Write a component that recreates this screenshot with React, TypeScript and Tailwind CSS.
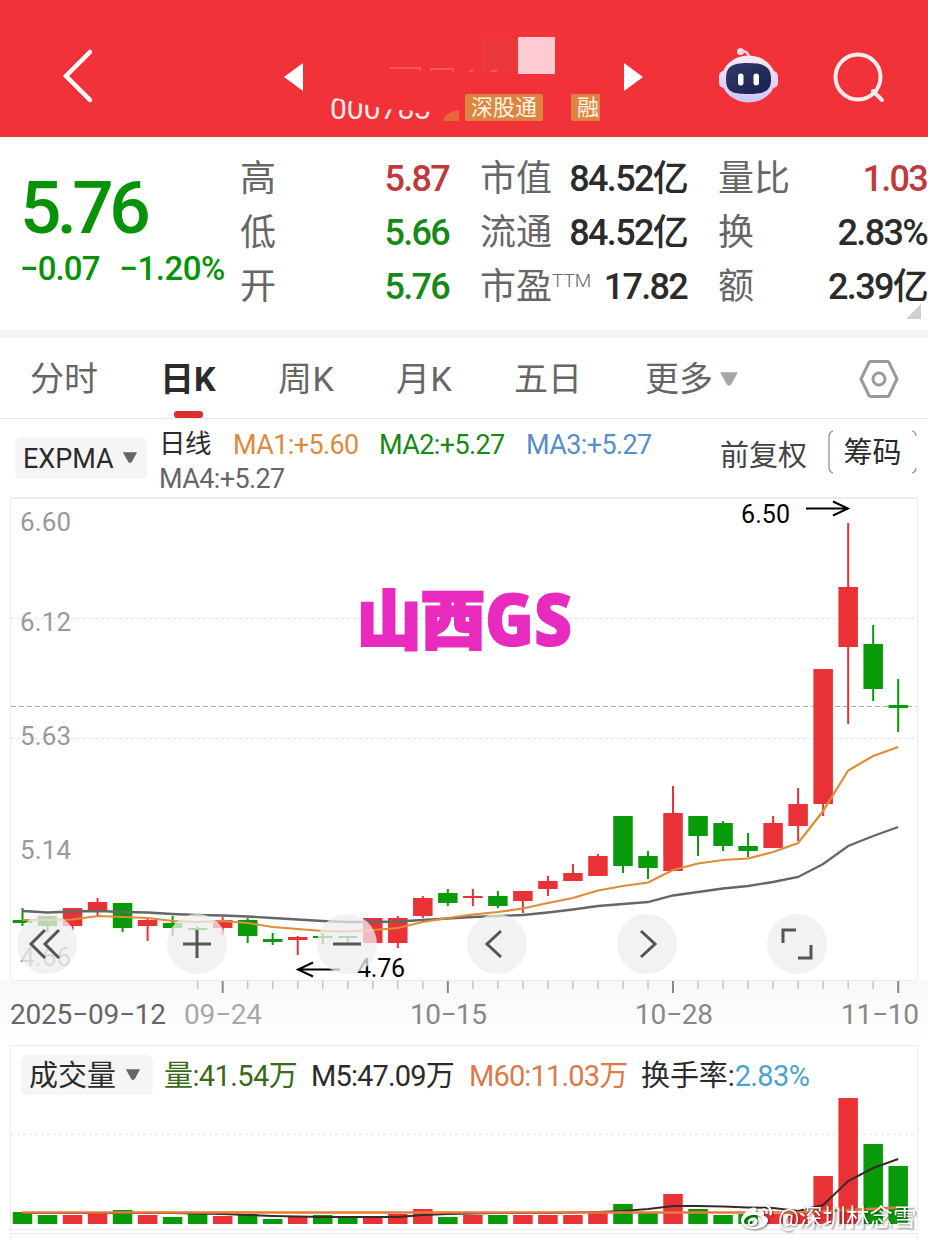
import { FaWeibo } from "react-icons/fa";

const RED = "#e93236";
const GREEN = "#089a08";

// [open/close top, open/close bottom, high, low, color]
const candles: [number, number, number, number, string][] = [
  [920, 923, 908, 926, GREEN],
  [916, 926, 916, 932, GREEN],
  [908, 926, 908, 930, RED],
  [902, 912, 898, 917, RED],
  [903, 928, 903, 932, GREEN],
  [920, 926, 917, 941, RED],
  [923, 928, 916, 936, GREEN],
  [928, 930, 926, 931, GREEN],
  [920, 928, 917, 935, RED],
  [920, 936, 918, 943, GREEN],
  [939, 942, 933, 945, GREEN],
  [937, 940, 936, 955, RED],
  [936, 938, 933, 944, GREEN],
  [936, 938, 936, 943, GREEN],
  [918, 943, 918, 943, RED],
  [918, 943, 916, 948, RED],
  [898, 916, 896, 918, RED],
  [893, 903, 889, 906, GREEN],
  [896, 898, 889, 906, RED],
  [896, 906, 891, 908, GREEN],
  [891, 901, 891, 913, RED],
  [881, 889, 876, 896, RED],
  [873, 881, 864, 881, RED],
  [856, 876, 854, 876, RED],
  [816, 866, 816, 873, GREEN],
  [856, 868, 851, 879, GREEN],
  [813, 871, 786, 871, RED],
  [816, 836, 816, 856, GREEN],
  [823, 846, 821, 851, GREEN],
  [846, 851, 833, 857, GREEN],
  [823, 848, 816, 848, RED],
  [804, 826, 788, 841, RED],
  [669, 804, 669, 816, RED],
  [587, 647, 523, 724, RED],
  [644, 689, 625, 701, GREEN],
  [705, 708, 679, 732, GREEN],
];

const volumes = [
  1212, 1215, 1215, 1214, 1210, 1215, 1217, 1214, 1216, 1214, 1219, 1217, 1215,
  1218, 1216, 1214, 1209, 1217, 1215, 1215, 1215, 1215, 1215, 1212, 1204, 1213,
  1194, 1209, 1215, 1214, 1214, 1212, 1176, 1098, 1144, 1166,
];

const ma1 = [
  920, 920, 919.5, 916, 917, 918, 921, 922, 921, 923, 927, 929, 931, 931.5, 930,
  928, 922, 918, 914.5, 912, 908.5, 903, 898, 890.5, 886, 882.5, 870, 863.5,
  860, 858.5, 852, 843, 811, 770.5, 756, 747,
];

const ma4 = [
  911, 912.5, 911.5, 911, 912, 912.5, 914, 915, 915.5, 916.5, 918, 919.5, 921,
  922, 922, 921.5, 920, 918.5, 917, 916, 915, 912.5, 909.5, 906, 904, 902,
  895.5, 892, 888.5, 886, 882, 877, 864, 846, 836, 827,
];

const volMa5 = [
  1213, 1213, 1213, 1213, 1213, 1213, 1213, 1213.5, 1214, 1215, 1216, 1216.5,
  1217, 1217, 1217, 1217, 1215, 1214, 1213.5, 1213, 1213, 1213, 1212.5, 1212,
  1211, 1209, 1206, 1206, 1206.5, 1207.5, 1208, 1211, 1205, 1181, 1168, 1159,
];

const cx = (i: number) => 22.5 + i * 25.02;
const line = (ys: number[]) => ys.map((y, i) => `${cx(i)},${y}`).join(" ");

const Caret = ({ className }: { className: string }) => (
  <svg viewBox="0 0 18 14" className={className}>
    <path d="M1 1h16L11 12q-2 2-4 0z" fill="currentColor" />
  </svg>
);

const Header = () => (
  <header className="relative h-[137px] bg-[#f13239]">
    <svg className="absolute left-0 top-0" width="928" height="137">
      <path d="M90 52 66 76l24 24" fill="none" stroke="#fff" strokeWidth="4.5" strokeLinecap="round" />
      <path d="M303 63v28l-19-14zM624 63v28l19-14z" fill="#fff" />
      <rect x="482" y="38" width="36" height="34" fill="#ec373d" />
      <rect x="518" y="37" width="37" height="37" fill="#ffcbd3" />
      <path d="M390 68h30v3M431 71v-2h22v3M469 71h4M491 71h6" stroke="#f7565d" strokeWidth="2" fill="none" />
      <path d="M443 121q1-8 16-11v11z" fill="#e8663c" />
      {/* assistant */}
      <defs>
        <linearGradient id="shell" x1="0" y1="0" x2="0" y2="1">
          <stop offset="0" stopColor="#fdeaf2" />
          <stop offset="1" stopColor="#ccc6ff" />
        </linearGradient>
        <linearGradient id="visor" x1="0" y1="0" x2="1" y2="1">
          <stop offset="0" stopColor="#333c66" />
          <stop offset="1" stopColor="#17204f" />
        </linearGradient>
      </defs>
      <circle cx="740.500" cy="51.500" r="3.500" fill="#ffdfe6" />
      <path d="M741 51q8 0 8 7" fill="none" stroke="#ffd3dc" strokeWidth="2.500" />
      <rect x="719" y="71" width="10" height="17" rx="5" fill="#e3d5fa" />
      <rect x="768" y="71" width="10" height="17" rx="5" fill="#e3d5fa" />
      <ellipse cx="748.500" cy="79" rx="27" ry="23.500" fill="url(#shell)" />
      <path d="M748 63c17 0 23 4 23 16s-6 15-23 15-22-3-22-15 5-16 22-16z" fill="url(#visor)" />
      <rect x="738" y="73.500" width="5.500" height="12" rx="2.700" fill="#fff" />
      <rect x="753.500" y="73.500" width="5.500" height="12" rx="2.700" fill="#fff" />
      {/* search */}
      <circle cx="858" cy="77" r="22.500" fill="none" stroke="#ffeced" strokeWidth="4" />
      <path d="m873 91 9 9" stroke="#ffeced" strokeWidth="4" strokeLinecap="round" />
    </svg>
    <div className="absolute left-[330px] top-[94px] text-[30px] leading-[30px] text-[#ffe9ea] [clip-path:polygon(0_10%,15%_20%,55%_50%,100%_60%,100%_100%,0_100%)]">
      000783
    </div>
    <div className="absolute left-[465px] top-[94px] h-[27px] w-[78px] rounded-[2px] bg-[#dd8540] pl-[6px] text-[22px] leading-[27px] text-[#fff3e4]">
      深股通
    </div>
    <div className="absolute left-[571px] top-[94px] h-[27px] w-[29px] overflow-hidden rounded-l-[2px] bg-[#dd8540] pl-[6px] text-[22px] leading-[27px] text-[#fff3e4]">
      融
    </div>
  </header>
);

const Stat = ({ label, value, sup, tone = "text-[#2b2b2b]" }: { label: string; value: string; sup?: string; tone?: string }) => (
  <div className="flex h-[54px] items-center justify-between whitespace-nowrap">
    <span className="flex text-[36px] text-[#666]">
      {label}
      {sup && <span className="mt-[11px] text-[19px] font-light leading-5">{sup}</span>}
    </span>
    <span className={`mr-[1px] text-[36px] font-medium tracking-[-1.7px] ${tone}`}>{value}</span>
  </div>
);

const Quote = () => (
  <section className="relative flex h-[193px] pt-[15px]">
    <div className="w-[240px] shrink-0 pl-[20px] text-[#089208]">
      <div className="mt-[14px] text-[73px] font-medium leading-[84px] tracking-[-4.7px]">5.76</div>
      <div className="mt-px flex gap-[20px] whitespace-nowrap text-[33px] font-medium leading-9 tracking-[-0.9px]">
        <span>−0.07</span>
        <span className="tracking-[-0.5px]">−1.20%</span>
      </div>
    </div>
    <div className="w-[210px]">
      <Stat label="高" value="5.87" tone="text-[#c03a3d]" />
      <Stat label="低" value="5.66" tone="text-[#158a15]" />
      <Stat label="开" value="5.76" tone="text-[#158a15]" />
    </div>
    <div className="ml-[30px] w-[208px]">
      <Stat label="市值" value="84.52亿" />
      <Stat label="流通" value="84.52亿" />
      <Stat label="市盈" sup="TTM" value="17.82" />
    </div>
    <div className="ml-[30px] w-[210px]">
      <Stat label="量比" value="1.03" tone="text-[#c03a3d]" />
      <Stat label="换" value="2.83%" />
      <Stat label="额" value="2.39亿" />
    </div>
    <svg className="absolute bottom-[11px] right-[7px]" width="15" height="15">
      <path d="M15 0v15H0z" fill="#cfcfcf" />
    </svg>
  </section>
);

const Tabs = () => (
  <nav className="relative flex h-[81px] items-center whitespace-nowrap border-b border-[#e6e6e6] pt-[3px] text-[34px] text-[#666]">
    <span className="ml-[30px] w-[130px]">分时</span>
    <span className="relative flex h-full w-[118px] items-center font-bold text-[#2b2b2b]">
      日K
      <i className="absolute bottom-0 left-[14px] h-[7px] w-[29px] rounded-[3px] bg-[#d9302f]" />
    </span>
    <span className="w-[118px] tracking-[0.5px]">周K</span>
    <span className="w-[118px] tracking-[0.5px]">月K</span>
    <span className="w-[131px]">五日</span>
    <span>更多</span>
    <Caret className="-mt-[2px] ml-[6px] h-[16px] w-[20px] text-[#a6a6a6]" />
    <svg className="-mt-[2px] ml-auto mr-[29px]" width="40" height="40" fill="none" stroke="#9a9a9a" strokeWidth="3">
      <path d="M11.500 2.500h17q1 0 1.500 1L38 20l-8 16.500q-.5 1-1.500 1h-17q-1 0-1.500-1L2 20l8-16.500q.5-1 1.500-1z" strokeLinejoin="round" />
      <circle cx="20" cy="20" r="6" />
    </svg>
  </nav>
);

const Indicators = () => (
  <section className="flex h-[78px] whitespace-nowrap">
    <button className="ml-[15px] mt-[18px] flex h-[42px] w-[132px] items-center rounded-md bg-[#f5f5f5] pl-[8px] pt-[3px] text-[27px] text-[#2b2b2b]">
      EXPMA
      <Caret className="-mt-[4px] ml-[8px] h-[13px] w-[16px] text-[#666]" />
    </button>
    <div className="ml-[12px] mt-[9px] w-[561px] text-[27px] leading-[34px] tracking-[-0.6px]">
      <div className="flex">
        <span className="w-[74px] text-[26.5px] leading-[32px] text-[#2b2b2b]">日线</span>
        <span className="w-[146px] text-[#dd8a3c]">MA1:+5.60</span>
        <span className="w-[147px] text-[#158a15]">MA2:+5.27</span>
        <span className="text-[#568fc9]">MA3:+5.27</span>
      </div>
      <div className="text-[#666]">MA4:+5.27</div>
    </div>
    <span className="mt-[15px] text-[29px] leading-[44px] text-[#444]">前复权</span>
    <button className="relative ml-auto mr-[11px] mt-[11px] h-[44px] w-[89px] pt-[3px] text-[29px] leading-[41px] text-[#2b2b2b]">
      筹码
      <svg className="absolute inset-0" width="89" height="44" fill="none" stroke="#888" strokeWidth="1.200">
        <path d="M5 1Q1 2 1 7v30q0 5 4 6M84 1q4 1 4 5M84 43q4-1 4-5" />
      </svg>
    </button>
  </section>
);

const toolIcons = [
  "M28 16 14 30l14 14M42 16 28 30l14 14",
  "M30 16v28M16 30h28",
  "M16 30h28",
  "M34 17 20 30l14 13",
  "M24 17l14 13-14 13",
  "M16 29V16h13M31 44h13V31",
];

const KLine = () => (
  <section className="relative mx-[10px] h-[484px] border border-t-2 border-[#ebebeb]">
    <svg className="absolute -left-px -top-[2px]" width="908" height="484" viewBox="10 497 908 484">
      <path d="M11 618.500h905M11 738.500h905" stroke="#e0e0e0" strokeDasharray="3 3" />
      <path d="M11 706.500h905" stroke="#a3b394" strokeDasharray="5 3" />
      <g fill="#999" fontSize="26">
        <text x="20" y="531" textLength="51">6.60</text>
        <text x="20" y="631" textLength="51">6.12</text>
        <text x="20" y="745" textLength="51">5.63</text>
        <text x="20" y="859" textLength="51">5.14</text>
        <text x="20" y="966" textLength="51">4.66</text>
      </g>
      {candles.map(([top, bottom, high, low, color], i) => (
        <g key={i} fill={color}>
          <rect x={cx(i) - 1} y={high} width="2" height={low - high} />
          <rect x={cx(i) - 9.75} y={top} width="19.500" height={bottom - top} />
        </g>
      ))}
      <polyline points={line(ma4)} fill="none" stroke="#666" strokeWidth="2.300" />
      <polyline points={line(ma1)} fill="none" stroke="#e08b36" strokeWidth="2.200" />
      <g fill="#000" fontSize="25">
        <text x="741" y="523" textLength="49">6.50</text>
        <text x="357" y="977" textLength="48">4.76</text>
      </g>
      <path d="M806 508.500h41M833 501.500l15 7-15 7M340 969.500h-41M313 962.500l-15 7 15 7" fill="none" stroke="#000" strokeWidth="2" />
      <g fill="#e82abf" stroke="#e82abf" fontWeight="900">
        <text x="357" y="643" fontSize="63" strokeWidth="3" textLength="128" lengthAdjust="spacingAndGlyphs">山西</text>
        <text x="485" y="646" fontSize="72" strokeWidth="1" fontFamily="Open Sans" fontWeight="800" textLength="87" lengthAdjust="spacingAndGlyphs">GS</text>
      </g>
    </svg>
    <div className="absolute left-[6px] top-[415px] flex gap-[90px]">
      {toolIcons.map((d) => (
        <button key={d} className="size-[60px] shrink-0 rounded-full bg-[#eeeeee]/75">
          <svg width="60" height="60" fill="none" stroke="#555" strokeWidth="3">
            <path d={d} />
          </svg>
        </button>
      ))}
    </div>
  </section>
);

const DateAxis = () => (
  <div className="h-[64px] bg-gradient-to-b from-[#f8f8f8] to-white">
    <svg width="928" height="64" viewBox="0 981 928 64">
      {candles.map((_, i) => {
        if (i < 7) return null;
        const major = [8, 17, 26, 35].includes(i);
        return (
          <path
            key={i}
            d={`M${cx(i)} 981v${major ? 12 : 8}`}
            stroke={major ? "#888" : "#c4c4c4"}
            strokeWidth={major ? 2 : 1.5}
          />
        );
      })}
      <g fontSize="28" fill="#888">
        <text x="10" y="1024" fill="#666" textLength="156">2025−09−12</text>
        <text x="184" y="1024" fill="#a8a8a8" textLength="78">09−24</text>
        <text x="410" y="1024" textLength="77">10−15</text>
        <text x="635" y="1024" textLength="78">10−28</text>
        <text x="841" y="1024" textLength="78">11−10</text>
      </g>
    </svg>
  </div>
);

const Volume = () => (
  <section className="relative mx-[10px] h-[185px] border border-[#ebebeb]">
    <svg className="absolute -left-px -top-px" width="908" height="185" viewBox="10 1045 908 185">
      <path d="M11 1134.500h906" stroke="#e8e8e8" strokeDasharray="3 3" />
      {volumes.map((top, i) => (
        <rect key={i} x={cx(i) - 9.75} y={top} width="19.500" height={1224 - top} fill={candles[i][4]} />
      ))}
      <polyline points={line(volMa5)} fill="none" stroke="#3a2a26" strokeWidth="2" />
      <path d="M22 1212.500H800L898 1207.500" fill="none" stroke="#e67a3c" strokeWidth="2.500" />
    </svg>
    <div className="relative flex whitespace-nowrap pl-[10px] pt-[9px] text-[29px] leading-[42px] tracking-[-0.85px]">
      <button className="flex h-[40px] w-[132px] items-center rounded-md bg-[#f5f5f5] pl-[8px] pt-[2px] text-[29px] tracking-normal text-[#2b2b2b]">
        成交量
        <Caret className="-mt-[4px] ml-[9px] h-[13px] w-[16px] text-[#666]" />
      </button>
      <span className="ml-[11px] w-[147px] tracking-[-0.6px] text-[#3a6a1a]">量:41.54万</span>
      <span className="w-[158px]  text-[#2b2b2b]">M5:47.09万</span>
      <span className="w-[172px] text-[#df7848]">M60:11.03万</span>
      <span className="tracking-[-0.1px] text-[#2b2b2b]">
        换手率:<span className="tracking-[-0.6px] text-[#4ba3d0]">2.83%</span>
      </span>
    </div>
    <div className="absolute left-[730px] top-[156px] flex items-center gap-[6px] whitespace-nowrap text-[23.5px] leading-[30px] text-white [filter:drop-shadow(1px_1px_1px_rgba(0,0,0,0.55))]">
      <FaWeibo className="size-[31px]" />
      <span>@深圳林念雪</span>
    </div>
  </section>
);

export default function App() {
  return (
    <div className="h-[1239px] w-[928px] overflow-hidden bg-white font-['Roboto','Noto_Sans_CJK_SC',sans-serif]">
      <Header />
      <Quote />
      <div className="h-2 bg-[#f5f5f5]" />
      <Tabs />
      <Indicators />
      <KLine />
      <DateAxis />
      <Volume />
      <div className="mx-[10px] mt-[3px] h-[10px] border border-[#ebebeb]" />
    </div>
  );
}
